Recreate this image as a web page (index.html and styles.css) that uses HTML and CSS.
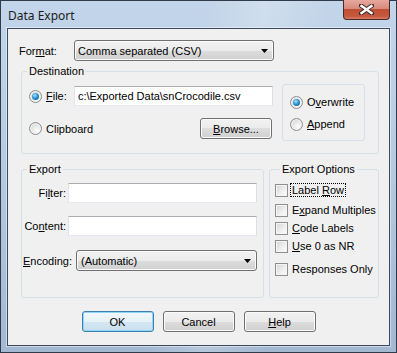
FILE: index.html
```html
<!DOCTYPE html>
<html lang="en">
<head>
<meta charset="UTF-8">
<title>Data Export</title>
<link rel="stylesheet" href="styles.css">
</head>
<body>
<div class="window">
<div class="titlebar">
<span class="title">Data Export</span>
<div class="close">
<svg width="15" height="11" viewBox="0 0 15 11">
<path d="M2 1.5 L13 9.5 M13 1.5 L2 9.5" stroke="#3a2a2a" stroke-width="4.2" stroke-linecap="square"/>
<path d="M2.5 2 L12.5 9 M12.5 2 L2.5 9" stroke="#fff" stroke-width="2.4" stroke-linecap="square"/>
</svg>
</div>
</div>

<div class="client">
<div class="format-row">
<span class="format-label">For<u>m</u>at:</span>
<div class="combo format-combo">
<span>Comma separated (CSV)</span>
<svg width="7" height="4" viewBox="0 0 7 4"><path d="M0 0 H7 L3.5 4 Z" fill="#000"/></svg>
</div>
</div>

<fieldset class="group dest">
<legend>Destination</legend>
<div class="dest-body">
<div class="dest-left">
<div class="dest-row">
<span class="radio on"></span>
<span class="rlabel file-label"><u>F</u>ile:</span>
<div class="textbox file-box">c:\Exported Data\snCrocodile.csv</div>
</div>
<div class="dest-row row2">
<span class="radio"></span>
<span class="rlabel">Clipboard</span>
<div class="btn browse"><u>B</u>rowse...</div>
</div>
</div>
<div class="mode-box">
<div class="opt"><span class="radio on"></span>O<u>v</u>erwrite</div>
<div class="opt"><span class="radio"></span><u>A</u>ppend</div>
</div>
</div>
</fieldset>

<div class="lower">
<fieldset class="group export">
<legend>Export</legend>
<div class="export-body">
<div class="field-row">
<span class="field-label">Fi<u>l</u>ter:</span>
<div class="textbox field-box"></div>
</div>
<div class="field-row content-row">
<span class="field-label">Co<u>n</u>tent:</span>
<div class="textbox field-box"></div>
</div>
<div class="field-row enc-row">
<span class="field-label enc-label"><u>E</u>ncoding:</span>
<div class="combo enc-combo">
<span>(Automatic)</span>
<svg width="7" height="4" viewBox="0 0 7 4"><path d="M0 0 H7 L3.5 4 Z" fill="#000"/></svg>
</div>
</div>
</div>
</fieldset>

<fieldset class="group options">
<legend>Export Options</legend>
<div class="options-body">
<div class="check first"><span class="box"></span><span class="focus">Label <u>R</u>ow</span></div>
<div class="check"><span class="box"></span>E<u>x</u>pand Multiples</div>
<div class="check"><span class="box"></span><u>C</u>ode Labels</div>
<div class="check"><span class="box"></span><u>U</u>se 0 as NR</div>
<div class="check last"><span class="box"></span>Responses Only</div>
</div>
</fieldset>
</div>

<div class="buttons">
<div class="btn default">OK</div>
<div class="btn">Cancel</div>
<div class="btn"><u>H</u>elp</div>
</div>
</div>
</div>
</body>
</html>
```

FILE: styles.css
```css
body {
margin: 0;
padding: 0;
font-family: "Liberation Sans", Arial, sans-serif;
font-size: 11px;
color: #000;
background: #fff;
}
u {
text-decoration: underline;
text-underline-offset: 1px;
}
.window {
box-sizing: border-box;
width: 397px;
height: 353px;
border: 1px solid #2f3b4b;
padding: 0 6px 6px 6px;
display: flex;
flex-direction: column;
background:
linear-gradient(100deg, rgba(255,255,255,0) 45%, rgba(255,255,255,0.22) 58%, rgba(255,255,255,0) 72%),
linear-gradient(to bottom, #c3d5ea 0%, #b8cce3 40%, #a3b8d1 100%);
}
.titlebar {
height: 27px;
display: flex;
align-items: flex-start;
}
.title {
font-family: "Noto Sans", "DejaVu Sans", sans-serif;
font-size: 12px;
color: #1b1b1b;
padding-left: 1px;
padding-top: 6px;
flex: 1;
}
.close {
width: 47px;
height: 20px;
margin-top: -1px;
box-sizing: border-box;
border: 1px solid #4b2a26;
border-top: none;
border-radius: 0 0 4px 4px;
background: linear-gradient(to bottom, #e5a89e 0%, #d88a7c 45%, #c24e34 50%, #c4583f 85%, #d97a62 100%);
display: flex;
align-items: center;
justify-content: center;
}
.client {
flex: 1;
border: 1px solid #3d4a5c;
box-shadow: 0 0 0 1px rgba(255,255,255,0.45);
background: #f0f0f0;
padding: 11px 0 0 0;
}
.format-row {
display: flex;
align-items: center;
padding-left: 11px;
}
.format-label {
width: 55px;
}
.combo {
box-sizing: border-box;
height: 21px;
border: 1px solid #707070;
border-radius: 3px;
background: linear-gradient(to bottom, #f2f2f2 0%, #ebebeb 50%, #dddddd 50%, #cfcfcf 100%);
box-shadow: inset 0 0 0 1px #fbfbfb;
display: flex;
align-items: center;
justify-content: space-between;
padding: 0 5px 0 3px;
}
.format-combo {
width: 200px;
}
.group {
margin: 0;
padding: 0;
border: 1px solid #d5dfe5;
border-radius: 3px;
}
.group legend {
line-height: 13px;
padding: 0 2px;
margin-left: 5px;
}
.dest {
margin: 4px 10px 0 13px;
padding: 6px 0 12px 0;
}
.dest-body {
display: flex;
}
.dest-left {
width: 244px;
padding: 2px 0 0 7px;
}
.dest-row {
display: flex;
align-items: center;
height: 20px;
}
.row2 {
height: 21px;
margin-top: 12px;
}
.radio {
box-sizing: border-box;
width: 13px;
height: 13px;
border-radius: 50%;
border: 1px solid #8d8d8d;
background: radial-gradient(circle at 65% 70%, #fdfdfd 0%, #e4e4e4 55%, #cfcfcf 100%);
box-shadow: inset 0 0 0 1px #f2f2f2;
display: inline-flex;
align-items: center;
justify-content: center;
flex-shrink: 0;
}
.radio.on::after {
content: "";
width: 7px;
height: 7px;
border-radius: 50%;
background: radial-gradient(circle at 40% 35%, #aee6ff 0%, #2c94d2 45%, #0d4f82 100%);
}
.rlabel {
margin-left: 4px;
}
.file-label {
width: 28px;
}
.textbox {
box-sizing: border-box;
height: 20px;
background: #fff;
border: 1px solid;
border-color: #abadb3 #dbdfe6 #e3e9ef #e2e3ea;
padding-left: 3px;
display: flex;
align-items: center;
}
.file-box {
width: 200px;
}
.btn {
box-sizing: border-box;
height: 21px;
width: 72px;
border: 1px solid #707070;
border-radius: 3px;
background: linear-gradient(to bottom, #f2f2f2 0%, #ebebeb 50%, #dddddd 50%, #cfcfcf 100%);
box-shadow: inset 0 0 0 1px #fbfbfb;
display: flex;
align-items: center;
justify-content: center;
}
.browse {
margin-left: auto;
margin-right: 1px;
}
.mode-box {
box-sizing: border-box;
width: 83px;
height: 57px;
margin-left: 9px;
border: 1px solid #d5dfe5;
border-radius: 3px;
padding: 9px 0 0 7px;
}
.opt {
display: flex;
align-items: center;
height: 16px;
}
.opt + .opt {
margin-top: 6px;
}
.opt .radio {
margin-right: 4px;
}
.lower {
display: flex;
margin: 9px 10px 0 13px;
gap: 5px;
}
.export {
width: 243px;
box-sizing: border-box;
padding: 7px 0 26px 0;
}
.field-row {
display: flex;
align-items: center;
}
.field-label {
width: 44px;
text-align: right;
margin-right: 2px;
}
.field-box {
width: 189px;
}
.content-row {
margin-top: 13px;
}
.enc-row {
margin-top: 14px;
}
.enc-label {
width: 53px;
text-align: left;
padding-left: 1px;
margin-right: 0;
}
.enc-combo {
width: 181px;
padding-left: 4px;
}
.options {
flex: 1;
padding: 6px 0 3px 5px;
}
.check {
display: flex;
align-items: center;
height: 16px;
margin-top: 2px;
}
.check.first {
margin-top: 0;
margin-bottom: 2px;
}
.check.first + .check {
margin-top: 4px;
}
.check.last {
margin-top: 7px;
}
.box {
box-sizing: border-box;
width: 13px;
height: 13px;
border: 1px solid #8f8f8f;
background: linear-gradient(135deg, #d4d4d4 0%, #f0f0f0 60%, #fdfdfd 100%);
box-shadow: inset 0 0 0 1px #f4f4f4;
margin-right: 4px;
flex-shrink: 0;
}
.focus {
outline: 1px dotted #000;
outline-offset: 0;
padding: 0 1px;
margin-left: -1px;
}
.buttons {
display: flex;
justify-content: center;
gap: 9px;
margin-top: 13px;
}
.btn.default {
border-color: #3c7fb1;
background: linear-gradient(to bottom, #f3f8fc 0%, #e6f1f8 50%, #d4e6f2 50%, #c9e0ef 100%);
box-shadow: inset 0 0 0 1px #8fd6f7;
}
```
